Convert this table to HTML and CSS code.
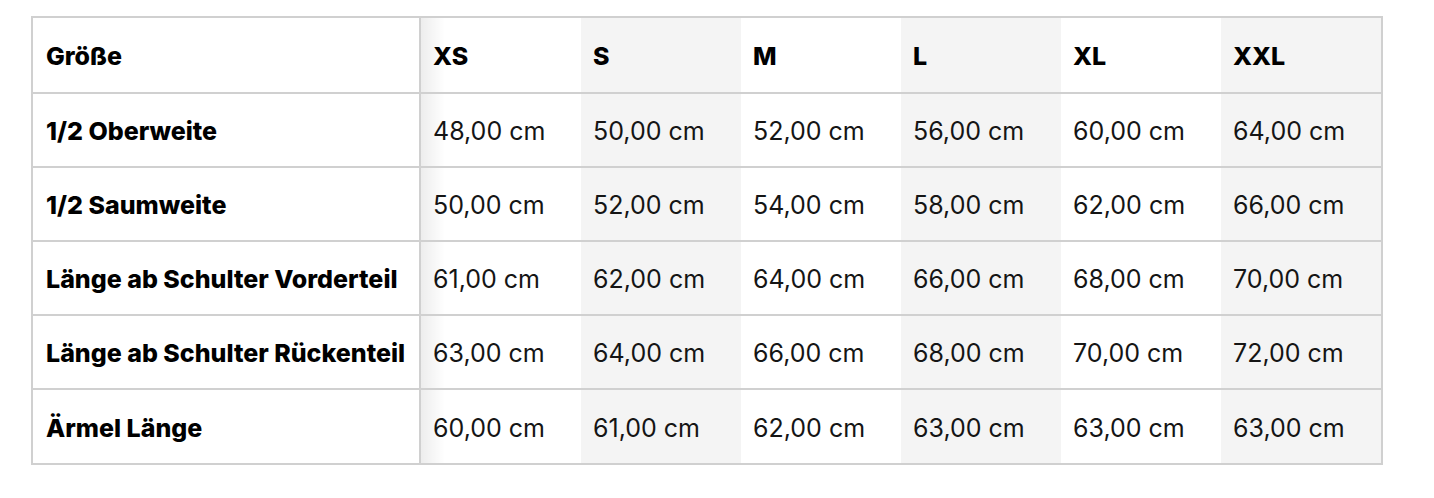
FILE: index.html
```
<!DOCTYPE html>
<html lang="de">
<head>
<meta charset="utf-8">
<title>Größentabelle</title>
<link rel="stylesheet" href="styles.css">
</head>
<body>
<div class="wrap">
<table class="sizes">
<colgroup><col class="c-label"><col class="c-size"><col class="c-size"><col class="c-size"><col class="c-size"><col class="c-size"><col class="c-size"></colgroup>
<thead>
<tr><th class="label">Größe</th><th>XS</th><th class="alt">S</th><th>M</th><th class="alt">L</th><th>XL</th><th class="alt">XXL</th></tr>
</thead>
<tbody>
<tr><th class="label">1/2 Oberweite</th><td>48,00 cm</td><td class="alt">50,00 cm</td><td>52,00 cm</td><td class="alt">56,00 cm</td><td>60,00 cm</td><td class="alt">64,00 cm</td></tr>
<tr><th class="label">1/2 Saumweite</th><td>50,00 cm</td><td class="alt">52,00 cm</td><td>54,00 cm</td><td class="alt">58,00 cm</td><td>62,00 cm</td><td class="alt">66,00 cm</td></tr>
<tr><th class="label">Länge ab Schulter Vorderteil</th><td>61,00 cm</td><td class="alt">62,00 cm</td><td>64,00 cm</td><td class="alt">66,00 cm</td><td>68,00 cm</td><td class="alt">70,00 cm</td></tr>
<tr><th class="label">Länge ab Schulter Rückenteil</th><td>63,00 cm</td><td class="alt">64,00 cm</td><td>66,00 cm</td><td class="alt">68,00 cm</td><td>70,00 cm</td><td class="alt">72,00 cm</td></tr>
<tr><th class="label">Ärmel Länge</th><td>60,00 cm</td><td class="alt">61,00 cm</td><td>62,00 cm</td><td class="alt">63,00 cm</td><td>63,00 cm</td><td class="alt">63,00 cm</td></tr>
</tbody>
</table>
</div>
</body>
</html>
```
FILE: styles.css
```
html, body {
  margin: 0;
  background: #ffffff;
}
body {
  font-family: Inter, Roboto, "Liberation Sans", sans-serif;
  color: #151515;
}
.wrap {
  padding: 16px 0 0 31px;
}
.sizes {
  border-collapse: separate;
  border-spacing: 0;
  table-layout: fixed;
  width: 1352px;
  border: 2px solid #d0d0d0;
}
.c-label { width: 388px; }
.c-size { width: 160px; }
.sizes th, .sizes td {
  box-sizing: border-box;
  height: 74px;
  padding: 2px 12px 0;
  text-align: left;
  vertical-align: middle;
  font-size: 25px;
  line-height: 30px;
  border-bottom: 2px solid #d0d0d0;
  white-space: nowrap;
}
.sizes thead th {
  height: 76px;
  font-weight: 800;
  color: #000;
}
.sizes tbody tr:last-child th,
.sizes tbody tr:last-child td {
  border-bottom: none;
  height: 73px;
}
.sizes td {
  font-weight: 400;
}
.sizes th.label {
  position: relative;
  padding-left: 13px;
  font-weight: 800;
  color: #000;
  border-right: 2px solid #d0d0d0;
}
.sizes th.label::after {
  content: "";
  position: absolute;
  top: 0;
  bottom: 0;
  right: -26px;
  width: 24px;
  background: linear-gradient(to right, rgba(0,0,0,0.07), rgba(0,0,0,0));
  pointer-events: none;
}
.sizes .alt {
  background: #f4f4f4;
}
```
